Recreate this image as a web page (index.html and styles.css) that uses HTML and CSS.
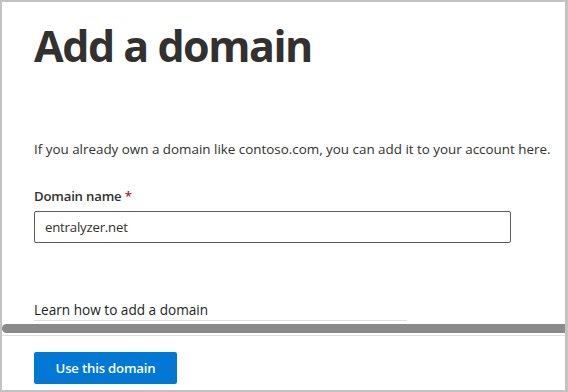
FILE: index.html
```html
<!DOCTYPE html>
<html lang="en">
<head>
    <meta charset="UTF-8">
    <title>Add a domain</title>
    <link rel="stylesheet" href="styles.css">
</head>
<body>
    <div class="frame">
        <div class="panel">
            <h1 class="title">Add a domain</h1>
            <p class="intro">If you already own a domain like contoso.com, you can add it to your account here.</p>

            <label class="field-label" for="domain">Domain name <span class="req">*</span></label>
            <input class="field" id="domain" type="text" value="entralyzer.net">

            <div class="learn">Learn how to add a domain</div>
            <div class="learn-edge"></div>
        </div>

        <!-- scrollbar of the panel -->
        <div class="hscroll"><div class="thumb"></div></div>

        <div class="footer">
            <button class="primary-btn">Use this domain</button>
        </div>
    </div>
</body>
</html>
```

FILE: styles.css
```css
body {
    margin: 0;
    background: #c3c3c3;
    font-family: "Segoe UI", "Open Sans", sans-serif;
    color: #323130;
}
.frame {
    width: 563px;
    height: 388px;
    margin: 2px 3px 2px 2px;
    background: #fff;
    display: flex;
    flex-direction: column;
}
.panel {
    padding: 0 32px;
    height: 320px;
    overflow: hidden;
}
.title {
    margin: 16px 0 0;
    font-size: 43px;
    font-weight: 700;
    line-height: 56px;
    letter-spacing: -1.5px;
}
.intro {
    margin: 65px 0 0;
    font-size: 13.4px;
    line-height: 20px;
    white-space: nowrap;
}
.field-label {
    display: block;
    margin-top: 27px;
    font-size: 13.2px;
    font-weight: 600;
    line-height: 20px;
    letter-spacing: -0.2px;
}
.req {
    color: #a4262c;
}
.field {
    display: block;
    box-sizing: border-box;
    width: 477px;
    height: 32px;
    margin-top: 5px;
    padding: 0 10px;
    border: 1px solid #605e5c;
    border-radius: 2px;
    font-family: inherit;
    font-size: 13.2px;
    letter-spacing: -0.2px;
    color: #323130;
    outline: none;
}
.learn {
    margin-top: 57px;
    font-size: 13.6px;
    line-height: 20px;
    color: #201f1e;
}
.learn-edge {
    width: 373px;
    height: 1px;
    background: #e1e1e1;
}
.hscroll {
    height: 14px;
    border-bottom: 1px solid #e1dfdd;
    box-sizing: border-box;
    padding-top: 2px;
}
.thumb {
    height: 9px;
    background: #8a8a8a;
    border-radius: 5px 0 0 5px;
}
.footer {
    padding: 16px 32px 0;
}
.primary-btn {
    width: 143px;
    height: 32px;
    background: #0078d4;
    color: #fff;
    border: none;
    border-radius: 2px;
    font-family: inherit;
    font-size: 13.2px;
    font-weight: 600;
    letter-spacing: -0.2px;
}
```
